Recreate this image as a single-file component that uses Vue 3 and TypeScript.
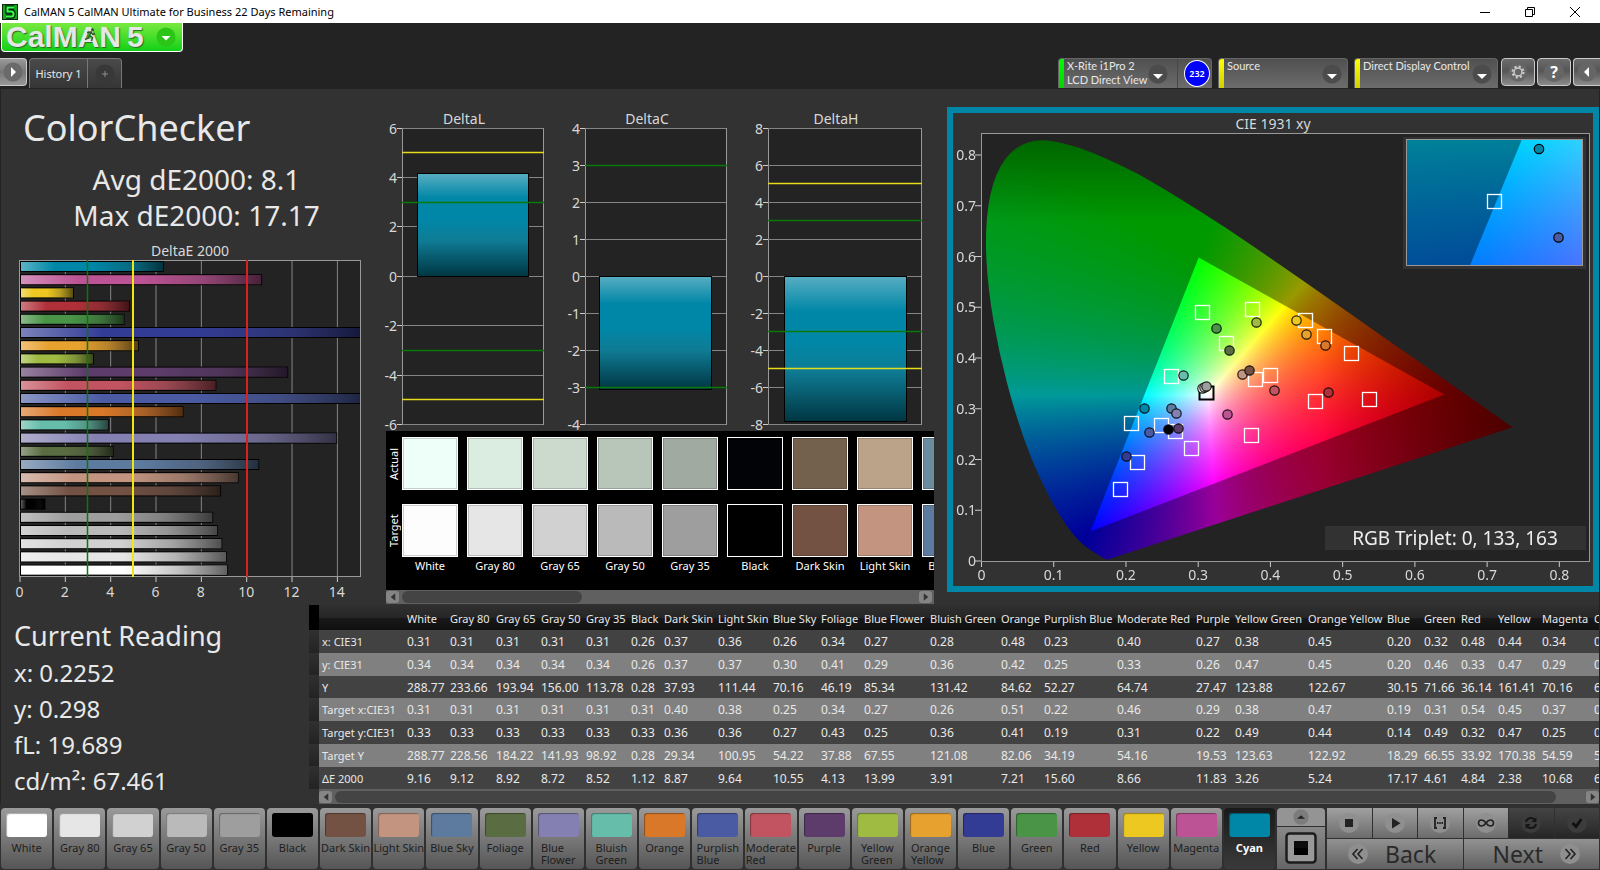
<script setup lang="ts">
import { computed, onMounted, ref } from 'vue'

interface Patch {
  name: string
  color: string
  actual?: string
  width: number
  values: string[]
}

const patches: Patch[] = [
  { name: 'White', color: '#fdfdfd', actual: '#edfff8', width: 43, values: ['0.31', '0.34', '288.77', '0.31', '0.33', '288.77', '9.16'] },
  { name: 'Gray 80', color: '#e6e6e6', actual: '#dbece0', width: 46, values: ['0.31', '0.34', '233.66', '0.31', '0.33', '228.56', '9.12'] },
  { name: 'Gray 65', color: '#d1d1d1', actual: '#ccdacd', width: 45, values: ['0.31', '0.34', '193.94', '0.31', '0.33', '184.22', '8.92'] },
  { name: 'Gray 50', color: '#bababa', actual: '#b8c6ba', width: 45, values: ['0.31', '0.34', '156.00', '0.31', '0.33', '141.93', '8.72'] },
  { name: 'Gray 35', color: '#9e9e9e', actual: '#a0aaa0', width: 45, values: ['0.31', '0.34', '113.78', '0.31', '0.33', '98.92', '8.52'] },
  { name: 'Black', color: '#000000', actual: '#020306', width: 33, values: ['0.26', '0.26', '0.28', '0.31', '0.33', '0.28', '1.12'] },
  { name: 'Dark Skin', color: '#735244', actual: '#74614d', width: 54, values: ['0.37', '0.37', '37.93', '0.40', '0.36', '29.34', '8.87'] },
  { name: 'Light Skin', color: '#c39581', actual: '#bba389', width: 55, values: ['0.36', '0.37', '111.44', '0.38', '0.36', '100.95', '9.64'] },
  { name: 'Blue Sky', color: '#5d7a9f', actual: '#698d9e', width: 48, values: ['0.26', '0.30', '70.16', '0.25', '0.27', '54.22', '10.55'] },
  { name: 'Foliage', color: '#5a6c42', width: 43, values: ['0.34', '0.41', '46.19', '0.34', '0.43', '37.88', '4.13'] },
  { name: 'Blue Flower', color: '#8480b2', width: 66, values: ['0.27', '0.29', '85.34', '0.27', '0.25', '67.55', '13.99'] },
  { name: 'Bluish Green', color: '#65bdaa', width: 71, values: ['0.28', '0.36', '131.42', '0.26', '0.36', '121.08', '3.91'] },
  { name: 'Orange', color: '#d97829', width: 43, values: ['0.48', '0.42', '84.62', '0.51', '0.41', '82.06', '7.21'] },
  { name: 'Purplish Blue', color: '#4a5ba4', width: 73, values: ['0.23', '0.25', '52.27', '0.22', '0.19', '34.19', '15.60'] },
  { name: 'Moderate Red', color: '#c25461', width: 79, values: ['0.40', '0.33', '64.74', '0.46', '0.31', '54.16', '8.66'] },
  { name: 'Purple', color: '#5d3c6b', width: 39, values: ['0.27', '0.26', '27.47', '0.29', '0.22', '19.53', '11.83'] },
  { name: 'Yellow Green', color: '#9fbb41', width: 73, values: ['0.38', '0.47', '123.88', '0.38', '0.49', '123.63', '3.26'] },
  { name: 'Orange Yellow', color: '#e7a12f', width: 79, values: ['0.45', '0.45', '122.67', '0.47', '0.44', '122.92', '5.24'] },
  { name: 'Blue', color: '#323c95', width: 37, values: ['0.20', '0.20', '30.15', '0.19', '0.14', '18.29', '17.17'] },
  { name: 'Green', color: '#499447', width: 37, values: ['0.32', '0.46', '71.66', '0.31', '0.49', '66.55', '4.61'] },
  { name: 'Red', color: '#b03039', width: 37, values: ['0.48', '0.33', '36.14', '0.54', '0.32', '33.92', '4.84'] },
  { name: 'Yellow', color: '#ecc821', width: 44, values: ['0.44', '0.47', '161.41', '0.45', '0.47', '170.38', '2.38'] },
  { name: 'Magenta', color: '#bc5394', width: 52, values: ['0.34', '0.29', '70.16', '0.37', '0.25', '54.59', '10.68'] },
  { name: 'Cyan', color: '#0087a7', width: 48, values: ['0.23', '0.30', '66.20', '0.21', '0.27', '56.10', '6.34'] },
]

const rowNames = ['x: CIE31', 'y: CIE31', 'Y', 'Target x:CIE31', 'Target y:CIE31', 'Target Y', 'ΔE 2000']
const tableWidth = 85 + patches.reduce((sum, p) => sum + p.width, 0)
const strip = patches.slice(0, 9)
const twoLine = new Set(['Blue Flower', 'Bluish Green', 'Purplish Blue', 'Moderate Red', 'Yellow Green', 'Orange Yellow'])
const buttonLabel = (name: string) => (twoLine.has(name) ? name.replace(' ', '\n') : name)

const selected = ref('Cyan')

const errorBars = computed(() =>
  [...patches].reverse().map((p, i) => ({
    color: p.name === 'White' ? '#ffffff' : p.color,
    y: 261 + i * 13.2,
    width: Math.min(Number(p.values[6]), 15.2) * 22.67,
  })),
)

interface DeltaChart {
  title: string
  titleX: number
  x: number
  width: number
  max: number
  step: number
  bar: { x: number; width: number; value: number }
  green: number
  yellow: number
}

const deltaCharts: DeltaChart[] = [
  { title: 'DeltaL', titleX: 464, x: 402, width: 141, max: 6, step: 2, bar: { x: 417, width: 111, value: 4.15 }, green: 3, yellow: 5 },
  { title: 'DeltaC', titleX: 647, x: 585, width: 141, max: 4, step: 1, bar: { x: 599, width: 112, value: -3.05 }, green: 3, yellow: 0 },
  { title: 'DeltaH', titleX: 836, x: 768, width: 153, max: 8, step: 2, bar: { x: 784, width: 122, value: -7.82 }, green: 3, yellow: 5 },
]
const deltaY = (c: DeltaChart, v: number) => Math.floor(277.3 - (v / c.max) * 148.3) - 0.5
const deltaTicks = (c: DeltaChart) => {
  const out: number[] = []
  for (let v = c.max; v >= -c.max; v -= c.step) out.push(v)
  return out
}
const limits = (c: DeltaChart) => [
  { v: c.green, color: '#0b780b' },
  { v: -c.green, color: '#0b780b' },
  ...(c.yellow ? [{ v: c.yellow, color: '#e6dc1e' }, { v: -c.yellow, color: '#e6dc1e' }] : []),
]

/* Chromaticity diagram */
const SX = 722.3
const SY = 507.5
const px = (x: number) => 981.5 + x * SX
const py = (y: number) => 561 - y * SY

const targets: [number, number][] = [
  [1202, 312], [1252, 309], [1226, 343], [1171, 376], [1255, 379], [1270, 375], [1131, 423],
  [1161, 425], [1175, 431], [1191, 448], [1251, 435], [1137, 462], [1120, 489], [1305, 320],
  [1324, 336], [1351, 353], [1315, 401], [1369, 399],
]
const readings: [number, number, string][] = [
  [1216, 328, '#499447'], [1256, 322, '#9fbb41'], [1229, 350, '#5a6c42'], [1183, 375, '#65bdaa'],
  [1242, 374, '#c39581'], [1249, 370, '#735244'], [1202, 388, '#ffffff'], [1204, 387, '#d1d1d1'],
  [1206, 386, '#9e9e9e'], [1227, 414, '#bc5394'], [1144, 408, '#0087a7'], [1171, 408, '#5d7a9f'],
  [1176, 413, '#8480b2'], [1149, 432, '#4a5ba4'], [1168, 429, '#000000'], [1178, 428, '#5d3c6b'],
  [1126, 456, '#323c95'], [1296, 320, '#ecc821'], [1306, 334, '#e7a12f'], [1325, 345, '#d97829'],
  [1328, 392, '#b03039'], [1274, 390, '#c25461'],
]

const locus: [number, number][] = [
  [0.1741, 0.005], [0.1714, 0.0051], [0.1689, 0.0069], [0.1644, 0.0109], [0.1566, 0.0177], [0.144, 0.0297],
  [0.1355, 0.0399], [0.1241, 0.0578], [0.1096, 0.0868], [0.0913, 0.1327], [0.0687, 0.2007], [0.0454, 0.295],
  [0.0235, 0.4127], [0.0082, 0.5384], [0.0039, 0.6548], [0.0139, 0.7502], [0.0389, 0.812], [0.0743, 0.8338],
  [0.1142, 0.8262], [0.1547, 0.8059], [0.1929, 0.7816], [0.2296, 0.7543], [0.3016, 0.6923], [0.3731, 0.6245],
  [0.4441, 0.5547], [0.5125, 0.4866], [0.5752, 0.4242], [0.627, 0.3725], [0.6658, 0.334], [0.6915, 0.3083],
  [0.719, 0.2809], [0.7347, 0.2653],
]

const gamutCanvas = ref<HTMLCanvasElement | null>(null)
const insetCanvas = ref<HTMLCanvasElement | null>(null)

function shade(w: number, h: number, left: number, top: number, sx: number, sy: number, level: number) {
  const layer = document.createElement('canvas')
  layer.width = w
  layer.height = h
  const ctx = layer.getContext('2d')!
  const img = ctx.createImageData(w, h)
  for (let j = 0; j < h; j++) {
    const y = Math.max(top - (j + 0.5) / sy, 0.0005)
    for (let i = 0; i < w; i++) {
      const x = left + (i + 0.5) / sx
      const X = x / y
      const Z = (1 - x - y) / y
      const r = Math.max(0, 3.2406 * X - 1.5372 - 0.4986 * Z)
      const g = Math.max(0, -0.9689 * X + 1.8758 + 0.0415 * Z)
      const b = Math.max(0, 0.0557 * X - 0.204 + 1.057 * Z)
      const fadeRed = 1 - Math.max(0, x - 0.47) * 1.95
      const fadeGreen = 1 - Math.max(0, y - 0.67) * 2.1
      const k = (255 * level * fadeRed * fadeGreen) / Math.max(r, g, b, 0.0001)
      const o = (j * w + i) * 4
      img.data[o] = r * k
      img.data[o + 1] = g * k
      img.data[o + 2] = b * k
      img.data[o + 3] = 255
    }
  }
  ctx.putImageData(img, 0, 0)
  return layer
}

function paint(canvas: HTMLCanvasElement, left: number, top: number, sx: number, sy: number) {
  const { width: w, height: h } = canvas
  const ctx = canvas.getContext('2d')!
  const at = (p: [number, number]): [number, number] => [(p[0] - left) * sx, (top - p[1]) * sy]

  ctx.save()
  ctx.beginPath()
  const pts = locus.map(at)
  ctx.moveTo(...pts[0])
  for (let i = 1; i < pts.length - 1; i++) {
    const [cx, cy] = pts[i]
    const [nx, ny] = pts[i + 1]
    ctx.quadraticCurveTo(cx, cy, (cx + nx) / 2, (cy + ny) / 2)
  }
  ctx.lineTo(...pts[pts.length - 1])
  ctx.closePath()
  ctx.clip()
  ctx.drawImage(shade(w, h, left, top, sx, sy, 0.6), 0, 0)
  ctx.restore()

  ctx.save()
  ctx.beginPath()
  ctx.moveTo(...at([0.64, 0.33]))
  ctx.lineTo(...at([0.3, 0.6]))
  ctx.lineTo(...at([0.15, 0.06]))
  ctx.closePath()
  ctx.clip()
  ctx.drawImage(shade(w, h, left, top, sx, sy, 1), 0, 0)
  ctx.restore()
}

onMounted(() => {
  if (gamutCanvas.value) paint(gamutCanvas.value, 0, 428 / SY, SX, SY)
  if (insetCanvas.value) paint(insetCanvas.value, 0.1765, 0.3039, 2780, 1872)
})
</script>

<template>
  <div class="app">
    <header class="titlebar">
      <svg class="app-icon" viewBox="0 0 16 16" aria-hidden="true">
        <rect width="16" height="16" fill="#0a2a0a" />
        <rect x="1" y="1" width="14" height="14" fill="#0fa81c" />
        <path d="M12 3.500H5.500V7.500H9.500Q11.500 7.500 11.500 10T9.500 12.500H4" fill="none" stroke="#021" stroke-width="4.500" />
        <path d="M12 3.500H5.500V7.500H9.500Q11.500 7.500 11.500 10T9.500 12.500H4" fill="none" stroke="#3dff4a" stroke-width="2" />
      </svg>
      <span class="window-title">CalMAN 5 CalMAN Ultimate for Business 22 Days Remaining</span>
      <button class="win" aria-label="Minimize"><svg viewBox="0 0 12 12"><path d="M1 6.500H11" /></svg></button>
      <button class="win" aria-label="Restore"><svg viewBox="0 0 12 12"><path d="M1.500 3.500H8.500V10.500H1.500ZM3.500 3.500V1.500H10.500V8.500H8.500" /></svg></button>
      <button class="win" aria-label="Close"><svg viewBox="0 0 12 12"><path d="M1 1L11 11M11 1L1 11" /></svg></button>
    </header>

    <button class="logo" aria-label="CalMAN 5 menu">
      <span class="logo-text">CalMAN</span>
      <span class="logo-text five">5</span>
      <svg class="runner" viewBox="0 0 12 14" aria-hidden="true">
        <circle cx="8.500" cy="1.700" r="1.500" fill="#2a5a2a" />
        <path d="M7.500 3.500L5.500 7.500L8.500 9.500L7.500 13M5.500 7.500L4.500 10L1 11.500M3 4.500L7 4L9 6.500L11 5.500" fill="none" stroke="#2a5a2a" stroke-width="1.500" />
      </svg>
      <svg class="logo-arrow" viewBox="0 0 20 20" aria-hidden="true">
        <circle cx="10" cy="10" r="9.500" fill="#2cc416" />
        <path d="M5.500 9H14.500L10 13.500Z" fill="#fff" />
      </svg>
    </button>

    <nav class="toolbar">
      <button class="side-btn first" aria-label="Expand left panel">
        <svg viewBox="0 0 20 20"><circle cx="10" cy="10" r="9.500" fill="#6a6a6a" /><path d="M8 5L13 10L8 15Z" fill="#fff" /></svg>
      </button>
      <div class="tabs">
        <button class="tab">History 1</button>
        <button class="tab add" aria-label="Add tab">
          <svg viewBox="0 0 20 20"><circle cx="10" cy="10" r="9.500" fill="#383838" /><path d="M10 7V13M7 10H13" stroke="#8c8c8c" /></svg>
        </button>
      </div>
      <span class="spacer"></span>
      <div class="device meter">
        <button class="device-btn">
          <span class="stripe green"></span>
          <span class="device-text">X-Rite i1Pro 2<br />LCD Direct View</span>
          <svg class="drop" viewBox="0 0 20 20"><circle cx="10" cy="10" r="9.500" /><path d="M5 10H15L10 15Z" fill="#fff" /></svg>
        </button>
        <span class="badge">232</span>
      </div>
      <button class="device device-btn source">
        <span class="stripe"></span>
        <span class="device-text">Source</span>
        <svg class="drop" viewBox="0 0 20 20"><circle cx="10" cy="10" r="9.500" /><path d="M5 10H15L10 15Z" fill="#fff" /></svg>
      </button>
      <button class="device device-btn display">
        <span class="stripe"></span>
        <span class="device-text">Direct Display Control</span>
        <svg class="drop" viewBox="0 0 20 20"><circle cx="10" cy="10" r="9.500" /><path d="M5 10H15L10 15Z" fill="#fff" /></svg>
      </button>
      <button class="side-btn" aria-label="Settings">
        <svg viewBox="0 0 20 20">
          <circle cx="10" cy="10" r="9.500" fill="#666" />
          <circle cx="10" cy="10" r="4" fill="none" stroke="#ccc" stroke-width="1.500" />
          <circle cx="10" cy="10" r="5.500" fill="none" stroke="#ccc" stroke-width="2" stroke-dasharray="2.160 2.160" />
        </svg>
      </button>
      <button class="side-btn help" aria-label="Help"><span>?</span></button>
      <button class="side-btn last" aria-label="Collapse right panel">
        <svg viewBox="0 0 20 20"><circle cx="10" cy="10" r="9.500" fill="#666" /><path d="M12 5L7 10L12 15Z" fill="#fff" /></svg>
      </button>
    </nav>

    <main class="workspace">
      <div class="upper">
        <section class="summary">
          <h1>ColorChecker</h1>
          <p class="stat">Avg dE2000: 8.1</p>
          <p class="stat">Max dE2000: 17.17</p>
          <svg class="chart" viewBox="1 240 379 365" role="img" aria-label="DeltaE 2000">
            <defs>
              <linearGradient id="sheenH">
                <stop offset="0" stop-color="#fff" stop-opacity=".36" />
                <stop offset=".24" stop-color="#fff" stop-opacity="0" />
                <stop offset=".5" stop-color="#222" stop-opacity="0" />
                <stop offset=".75" stop-color="#222" stop-opacity=".25" />
                <stop offset="1" stop-color="#000" stop-opacity=".62" />
              </linearGradient>
              <clipPath id="plotClip"><rect x="20" y="260" width="340" height="317" /></clipPath>
            </defs>
            <text x="190" y="256" text-anchor="middle">DeltaE 2000</text>
            <rect x="19.500" y="260.500" width="341" height="316" class="plot" />
            <g v-for="v in [0, 2, 4, 6, 8, 10, 12, 14]" :key="v">
              <line v-if="v" :x1="20 + v * 22.67" :x2="20 + v * 22.67" y1="261" y2="576" class="grid" />
              <line :x1="20 + v * 22.67" :x2="20 + v * 22.67" y1="577" y2="582" class="tick" />
              <text :x="19.500 + v * 22.67" y="597" text-anchor="middle">{{ v }}</text>
            </g>
            <g clip-path="url(#plotClip)">
              <g v-for="(b, i) in errorBars" :key="i">
                <rect x="20" :y="b.y" :width="b.width" height="11" fill="#000" />
                <rect x="21" :y="b.y + 1" :width="b.width - 2" height="9" :fill="b.color" />
                <rect x="21" :y="b.y + 1" :width="b.width - 2" height="9" fill="url(#sheenH)" />
              </g>
              <line x1="87.500" x2="87.500" y1="260" y2="577" stroke="#0b780b" stroke-width="1.500" />
              <line x1="133" x2="133" y1="260" y2="577" stroke="#f0e614" stroke-width="2" />
              <line x1="247" x2="247" y1="260" y2="577" stroke="#d8201e" stroke-width="2" />
            </g>
          </svg>
        </section>

        <section class="middle">
          <svg class="chart" viewBox="380 89 560 342" role="img" aria-label="Delta L, C and H">
            <defs>
              <linearGradient id="barV" x2="0" y2="1">
                <stop offset="0" stop-color="#58adc2" />
                <stop offset=".24" stop-color="#0087a7" />
                <stop offset=".45" stop-color="#0087a7" />
                <stop offset=".65" stop-color="#0f7c95" />
                <stop offset="1" stop-color="#003642" />
              </linearGradient>
            </defs>
            <g v-for="c in deltaCharts" :key="c.title">
              <text :x="c.titleX" y="124" text-anchor="middle">{{ c.title }}</text>
              <rect :x="c.x + 0.5" y="128.500" :width="c.width" height="296" class="plot" />
              <g v-for="v in deltaTicks(c)" :key="v">
                <line :x1="c.x" :x2="c.x + c.width" :y1="deltaY(c, v)" :y2="deltaY(c, v)" class="grid" />
                <line :x1="c.x - 5" :x2="c.x" :y1="deltaY(c, v)" :y2="deltaY(c, v)" class="tick" />
                <text :x="c.x - 5" :y="deltaY(c, v) + 5.5" text-anchor="end">{{ v }}</text>
              </g>
              <rect
                :x="c.bar.x + 0.5"
                :y="Math.min(deltaY(c, 0), deltaY(c, c.bar.value))"
                :width="c.bar.width"
                :height="Math.abs(deltaY(c, 0) - deltaY(c, c.bar.value))"
                fill="url(#barV)"
                stroke="#000"
              />
              <line
                v-for="l in limits(c)"
                :key="l.v"
                :x1="c.x"
                :x2="c.x + c.width + 1"
                :y1="deltaY(c, l.v)"
                :y2="deltaY(c, l.v)"
                :stroke="l.color"
                stroke-width="1.500"
              />
            </g>
          </svg>

          <div class="compare">
            <div class="row-names"><span>Actual</span><span>Target</span></div>
            <div class="compare-list">
              <div v-for="p in strip" :key="p.name" class="pair">
                <span class="chip" :style="{ background: p.actual }"></span>
                <span class="chip" :style="{ background: p.color }"></span>
                <span class="pair-name">{{ p.name }}</span>
              </div>
            </div>
          </div>
          <div class="scroll strip-scroll">
            <button aria-label="Scroll left"><svg viewBox="0 0 8 10"><path d="M7 0V10L1 5Z" /></svg></button>
            <span class="thumb"></span>
            <button aria-label="Scroll right"><svg viewBox="0 0 8 10"><path d="M1 0V10L7 5Z" /></svg></button>
          </div>
        </section>

        <section class="cie">
          <svg class="chart" viewBox="953 113 640 473" role="img" aria-label="CIE 1931 xy">
            <text x="1273" y="129" text-anchor="middle">CIE 1931 xy</text>
            <rect x="981.500" y="133.500" width="608" height="428" fill="#232323" />
            <foreignObject x="981.500" y="133.500" width="608" height="428">
              <canvas ref="gamutCanvas" width="608" height="428"></canvas>
            </foreignObject>
            <rect x="981.500" y="133.500" width="608" height="428" fill="none" stroke="#999" />
            <g v-for="n in 9" :key="n">
              <line :x1="px((n - 1) / 10)" :x2="px((n - 1) / 10)" y1="562" y2="567" class="tick" />
              <text :x="px((n - 1) / 10)" y="580" text-anchor="middle">{{ (n - 1) / 10 }}</text>
              <line x1="975" x2="981" :y1="py((n - 1) / 10)" :y2="py((n - 1) / 10)" class="tick" />
              <text x="976" :y="py((n - 1) / 10) + 5" text-anchor="end">{{ (n - 1) / 10 }}</text>
            </g>
            <rect x="1199.500" y="386.500" width="14" height="13" fill="none" stroke="#000" stroke-width="2" />
            <rect v-for="(t, i) in targets" :key="'t' + i" :x="t[0] - 6.5" :y="t[1] - 6.5" width="14" height="14" fill="none" stroke="#fff" stroke-width="1.300" />
            <circle v-for="(r, i) in readings" :key="'r' + i" :cx="r[0] + 0.5" :cy="r[1] + 0.5" r="4.700" :fill="r[2]" stroke="#000" stroke-width="1.200" stroke-opacity=".85" />

            <rect x="1403" y="137" width="183" height="132" fill="#323232" />
            <foreignObject x="1407" y="140" width="175" height="125">
              <canvas ref="insetCanvas" width="175" height="125"></canvas>
            </foreignObject>
            <rect x="1406.500" y="139.500" width="176" height="126" fill="none" stroke="#999" />
            <circle cx="1539" cy="149" r="4.700" fill="#0087a7" stroke="#000" stroke-width="1.200" />
            <circle cx="1558.500" cy="237.500" r="4.700" fill="#4a5ba4" stroke="#000" stroke-width="1.200" />
            <rect x="1487.500" y="194.500" width="14" height="14" fill="none" stroke="#fff" stroke-width="1.300" />

            <rect x="1325" y="526" width="261" height="24" fill="#323232" />
            <text x="1455" y="545" text-anchor="middle" class="triplet">RGB Triplet: 0, 133, 163</text>
          </svg>
        </section>
      </div>

      <div class="lower">
        <section class="reading">
          <h2>Current Reading</h2>
          <p>x: 0.2252</p>
          <p>y: 0.298</p>
          <p>fL: 19.689</p>
          <p>cd/m²: 67.461</p>
        </section>
        <section class="data">
          <div class="table-row">
            <div class="gutter"><span v-for="n in 8" :key="n"></span></div>
            <div class="table-wrap">
              <table :style="{ width: tableWidth + 'px' }">
                <colgroup>
                  <col class="name-col" />
                  <col v-for="p in patches" :key="p.name" :style="{ width: p.width + 'px' }" />
                </colgroup>
                <thead>
                  <tr>
                    <td></td>
                    <th v-for="p in patches" :key="p.name" scope="col">{{ p.name }}</th>
                  </tr>
                </thead>
                <tbody>
                  <tr v-for="(name, r) in rowNames" :key="name">
                    <th scope="row">{{ name }}</th>
                    <td v-for="p in patches" :key="p.name">{{ p.values[r] }}</td>
                  </tr>
                </tbody>
              </table>
            </div>
          </div>
          <div class="scroll table-scroll">
            <button aria-label="Scroll table left"><svg viewBox="0 0 8 10"><path d="M7 0V10L1 5Z" /></svg></button>
            <span class="thumb"></span>
            <button aria-label="Scroll table right"><svg viewBox="0 0 8 10"><path d="M1 0V10L7 5Z" /></svg></button>
          </div>
        </section>
      </div>
    </main>

    <footer class="bottom">
      <div class="patch-bar">
        <button
          v-for="p in patches"
          :key="p.name"
          class="patch"
          :class="{ active: p.name === selected }"
          @click="selected = p.name"
        >
          <span class="patch-color" :style="{ background: p.name === 'White' ? '#ffffff' : p.color }"></span>
          <span class="patch-name">{{ buttonLabel(p.name) }}</span>
        </button>
      </div>
      <div class="window-ctl">
        <button class="up" aria-label="Show more">
          <svg viewBox="0 0 20 20"><circle cx="10" cy="10" r="8.500" fill="#7c7c7c" /><path d="M5.500 12H14.500L10 8Z" fill="#222" /></svg>
        </button>
        <button class="pattern" aria-label="Pattern window">
          <svg viewBox="0 0 32 32">
            <rect x="1.500" y="1.500" width="29" height="29" rx="3" fill="#999" stroke="#1c1c1c" stroke-width="2.500" />
            <rect x="9" y="9" width="14" height="14" fill="#0c0c0c" /><rect x="9" y="16" width="14" height="7" fill="#000" />
          </svg>
        </button>
      </div>
      <div class="actions">
        <button aria-label="Stop"><svg viewBox="0 0 20 20"><circle cx="10" cy="10" r="10" /><path d="M6 6H14V14H6Z" fill="#222" /></svg></button>
        <button aria-label="Play"><svg viewBox="0 0 20 20"><circle cx="10" cy="10" r="10" /><path d="M7 5V15.500L15.500 10.250Z" fill="#222" /></svg></button>
        <button aria-label="Read series"><svg viewBox="0 0 20 20"><circle cx="10" cy="10" r="10" /><path d="M7 5H5V15H7M13 5H15V15H13" fill="none" stroke="#222" stroke-width="1.800" /><path d="M7 10H13" stroke="#222" stroke-width="2" stroke-dasharray="1.500 .750" /></svg></button>
        <button aria-label="Read continuously"><svg viewBox="0 0 20 20"><circle cx="10" cy="10" r="10" /><path d="M10 10C8 7 6.500 7 5.500 7A3 3 0 0 0 5.500 13C6.500 13 8 13 10 10S13.500 7 14.500 7A3 3 0 0 1 14.500 13C13.500 13 12 13 10 10Z" fill="none" stroke="#222" stroke-width="1.600" /></svg></button>
        <button class="dim" aria-label="Refresh"><svg viewBox="0 0 20 20"><circle cx="10" cy="10" r="10" /><path d="M5 9A5 5 0 0 1 13.500 6.500M15 11A5 5 0 0 1 6.500 13.500" fill="none" stroke="#161616" stroke-width="2" /><path d="M15.500 4V9H10.500ZM4.500 16V11H9.500Z" fill="#161616" /></svg></button>
        <button class="dim" aria-label="Accept"><svg viewBox="0 0 20 20"><circle cx="10" cy="10" r="10" /><path d="M5.500 10L9 13.500L14.500 6" fill="none" stroke="#101010" stroke-width="2.800" /></svg></button>
        <button class="nav"><svg viewBox="0 0 20 20"><circle cx="10" cy="10" r="10" /><path d="M9.500 5L5 10L9.500 15M14.500 5L10 10L14.500 15" fill="none" stroke="#222" stroke-width="1.600" /></svg><span>Back</span></button>
        <button class="nav next"><span>Next</span><svg viewBox="0 0 20 20"><circle cx="10" cy="10" r="10" /><path d="M5.500 5L10 10L5.500 15M10.500 5L15 10L10.500 15" fill="none" stroke="#222" stroke-width="1.600" /></svg></button>
      </div>
    </footer>
  </div>
</template>

<style>
body {
  margin: 0;
  background: #232323;
}
</style>

<style scoped>
.app {
  min-height: 100vh;
  overflow: hidden;
  background: #232323;
  color: #e8e8e8;
  font-family: 'Noto Sans', 'Open Sans', sans-serif;
  font-size: 11px;
}
.app * {
  box-sizing: border-box;
}
button {
  margin: 0;
  padding: 0;
  border: 0;
  color: inherit;
  font: inherit;
  cursor: pointer;
}
svg {
  display: block;
}
h1,
h2,
p {
  margin: 0;
  font-weight: 400;
}

.titlebar {
  display: flex;
  align-items: center;
  height: 23px;
  padding-right: 3px;
  background: #fff;
  color: #000;
}
.app-icon {
  width: 16px;
  height: 16px;
  margin: 0 6px 0 2px;
}
.window-title {
  flex: 1;
}
.win {
  display: grid;
  place-items: center;
  width: 45px;
  height: 22px;
  background: none;
}
.win svg {
  width: 12px;
  height: 12px;
  fill: none;
  stroke: #000;
}

.logo {
  position: relative;
  display: flex;
  align-items: center;
  width: 182px;
  height: 29px;
  margin-left: 1px;
  padding: 0 6px 0 4px;
  border: 1px solid #fff;
  border-top: 0;
  border-radius: 0 0 4px 4px;
  background: linear-gradient(#7ae840, #46df2b 50%, #13cf17);
}
.logo-text {
  font: 700 30px/26px 'Liberation Sans', Arial, sans-serif;
  color: #e6e6e6;
  text-shadow: 1px 1px 1px #2a6a2a;
}
.five {
  margin-left: 6px;
}
.runner {
  position: absolute;
  left: 82px;
  top: 5px;
  width: 12px;
  height: 14px;
}
.logo-arrow {
  width: 20px;
  height: 20px;
  margin-left: auto;
}

.toolbar {
  display: flex;
  height: 37px;
  padding-top: 6px;
}
.side-btn {
  display: grid;
  place-items: center;
  width: 32px;
  height: 28px;
  margin-right: 2px;
  border: 1px solid #cacaca;
  border-radius: 4px;
  background: linear-gradient(#6b6b6b, #565656 45%, #8b8b8b);
}
.display ~ .side-btn {
  width: 34px;
}
.side-btn svg {
  width: 20px;
  height: 20px;
}
.side-btn.first {
  width: 27px;
  border-left: 0;
  border-radius: 0 4px 4px 0;
  background: linear-gradient(#999, #777 50%, #999);
}
.display ~ .side-btn.last {
  width: 27px;
  margin-right: 0;
  border-right: 0;
  border-radius: 4px 0 0 4px;
}
.help {
  color: #fff;
  font-size: 16px;
  font-weight: 700;
}
.help span {
  width: 20px;
  border-radius: 50%;
  background: #666;
  line-height: 20px;
}
.tabs {
  display: flex;
  height: 30px;
  border: 1px solid #777;
  border-bottom: 0;
  border-radius: 4px 4px 0 0;
  background: linear-gradient(#4a4a4a, #353535);
}
.tab {
  width: 57px;
  background: none;
}
.tab.add {
  display: grid;
  place-items: center;
  width: 34px;
  border-left: 1px solid #777;
}
.add svg {
  width: 20px;
  height: 20px;
}
.spacer {
  flex: 1;
}
.device {
  display: flex;
  height: 30px;
  margin-right: 6px;
  border: 1px solid #666;
  border-bottom: 0;
  border-radius: 4px 4px 0 0;
  background: linear-gradient(#505050, #6c6c6c);
  overflow: hidden;
}
.device-btn {
  display: flex;
  align-items: center;
  text-align: left;
}
.meter .device-btn {
  width: 119px;
  border-right: 1px solid #474747;
  background: none;
}
.meter {
  width: 154px;
}
.source {
  width: 130px;
}
.display {
  width: 144px;
  margin-right: 3px;
}
.stripe {
  align-self: stretch;
  flex: none;
  width: 5px;
  background: linear-gradient(#ff0, #d0d000);
}
.stripe.green {
  background: linear-gradient(#0f0, #00d400);
}
.device-text {
  flex: 1;
  align-self: flex-start;
  margin-left: 3px;
  font-family: Lato, 'Noto Sans', sans-serif;
  font-size: 11px;
  line-height: 14px;
  white-space: nowrap;
}
.drop {
  flex: none;
  width: 20px;
  height: 20px;
  margin-right: 5px;
}
.meter .drop {
  margin-right: 9px;
}
.drop circle {
  fill: #4c4c4c;
}
.badge {
  width: 26px;
  height: 27px;
  margin: 1px 0 0 6px;
  border: 1px solid #fff;
  border-radius: 50%;
  background: #00f;
  color: #fff;
  font-size: 9px;
  font-weight: 600;
  line-height: 25px;
  text-align: center;
}

.workspace {
  margin: 0 1px;
  background: #323232;
}
.upper {
  display: grid;
  grid-template-columns: minmax(0, 379fr) minmax(0, 560fr) minmax(0, 659fr);
}
.chart {
  width: 100%;
  height: auto;
}
.chart text {
  fill: #d8d8d8;
  font-size: 14px;
}
.chart .triplet {
  fill: #eee;
  font-size: 19px;
}
.plot {
  fill: #232323;
  stroke: #999;
}
.grid {
  stroke: #858585;
}
.tick {
  stroke: #ccc;
}
canvas {
  display: block;
  width: 100%;
  height: 100%;
}

.summary {
  padding-top: 15px;
}
h1 {
  margin: 0 0 9px 22px;
  font-size: 36px;
  line-height: 48px;
}
.stat {
  padding-left: 12px;
  font-size: 28px;
  line-height: 36px;
  text-align: center;
}
.stat + .stat {
  margin-bottom: 7px;
}

.compare {
  display: flex;
  height: 159px;
  margin: 0 6px;
  background: #000;
  color: #fff;
}
.row-names {
  display: flex;
  flex-direction: column;
  gap: 14px;
  width: 16px;
  padding-top: 6px;
}
.row-names span {
  height: 53px;
  writing-mode: vertical-rl;
  transform: rotate(180deg);
  line-height: 16px;
  text-align: center;
}
.compare-list {
  display: flex;
  gap: 9px;
  flex: 1;
  min-width: 0;
  padding-top: 6px;
  overflow: hidden;
}
.pair {
  flex: none;
  width: 56px;
  text-align: center;
}
.chip {
  display: block;
  height: 53px;
  margin-bottom: 14px;
  border: 1px solid #fff;
  box-shadow: inset 0 0 0 1px rgba(0, 0, 0, 0.18);
}
.chip + .chip {
  margin-bottom: 1px;
}
.pair-name {
  display: block;
  line-height: 16px;
  white-space: nowrap;
}
.scroll {
  display: flex;
  align-items: center;
  height: 14px;
  background: #606060;
}
.scroll button {
  display: grid;
  place-items: center;
  width: 13px;
  height: 12px;
  border-radius: 3px;
  background: #858585;
}
.scroll svg {
  width: 6px;
  height: 10px;
  fill: #333;
}
.thumb {
  height: 12px;
  margin-left: 3px;
  border-radius: 6px;
  background: #444;
}
.strip-scroll {
  margin: 0 6px;
  padding-right: 2px;
}
.strip-scroll .thumb {
  width: 33%;
  margin-right: auto;
}

.cie {
  align-self: start;
  margin: 18px 0 0 7px;
  border: 6px solid #0087a7;
}

.lower {
  display: flex;
}
.reading {
  flex: none;
  width: 308px;
  padding: 11px 0 0 13px;
}
h2 {
  font-size: 27px;
  line-height: 39px;
}
.reading p {
  font-size: 24px;
  line-height: 36px;
}
.data {
  flex: 1;
  min-width: 0;
}
.table-row {
  display: flex;
}
.gutter {
  display: grid;
  flex: none;
  width: 10px;
  grid-template-rows: 25px repeat(7, 1fr);
}
.gutter span {
  background: linear-gradient(#303030, #232323);
}
.gutter span:first-child {
  background: #000;
}
.table-wrap {
  flex: 1;
  min-width: 0;
  overflow: hidden;
}
table {
  table-layout: fixed;
  border-collapse: collapse;
}
.name-col {
  width: 85px;
}
th,
td {
  padding: 1px 0 0 3px;
  overflow: visible;
  font-size: 12px;
  font-weight: 400;
  line-height: 20px;
  text-align: left;
  white-space: nowrap;
}
th {
  font-size: 11px;
}
thead tr {
  height: 25px;
  background: linear-gradient(#303030, #262626 50%, #181818 52%, #101010);
}
thead th {
  padding-top: 2px;
}
tbody tr {
  height: 23px;
  background: #424242;
}
tbody tr:nth-child(even) {
  background: #808080;
}
tbody tr:nth-child(4n + 3) {
  height: 22px;
}
.table-scroll {
  height: 15px;
  margin-left: 10px;
}
.table-scroll .thumb {
  flex: 1;
  margin-right: 30px;
}

.bottom {
  display: flex;
  gap: 2px;
  padding: 4px 1px 1px;
  background: #303030;
}
.patch-bar {
  display: grid;
  flex: 1;
  grid-template-columns: repeat(24, minmax(0, 1fr));
  gap: 2px;
}
.patch {
  display: flex;
  flex-direction: column;
  align-items: center;
  height: 61px;
  padding-top: 5px;
  border-radius: 4px;
  background: linear-gradient(#9a9a9a, #787878 50%, #555);
  color: #1e1e1e;
}
.patch-color {
  width: 41px;
  height: 24px;
  border-radius: 3px;
  box-shadow: inset 1px 1px 1px rgba(0, 0, 0, 0.35);
}
.patch-name {
  margin-top: 5px;
  font-size: 11px;
  line-height: 12px;
  text-align: left;
  white-space: pre;
}
.patch.active {
  background: linear-gradient(#1a1a1a, #3a3a3a);
  color: #fff;
  font-weight: 700;
}
.window-ctl {
  display: grid;
  grid-template-rows: 18px 42px;
  gap: 1px;
  width: 48px;
}
.window-ctl button {
  display: grid;
  place-items: center;
  background: linear-gradient(#888, #666);
}
.window-ctl .up {
  border-radius: 4px 4px 0 0;
  background: #949494;
}
.up svg {
  width: 18px;
  height: 18px;
}
.pattern svg {
  width: 32px;
  height: 32px;
}
.actions {
  display: grid;
  grid-template-columns: repeat(6, 1fr);
  grid-template-rows: 30px 30px;
  gap: 1px;
  width: 272px;
}
.actions button {
  display: grid;
  place-items: center;
  background: linear-gradient(#a0a0a0, #6c6c6c);
  color: #2a2a2a;
}
.actions svg {
  width: 20px;
  height: 20px;
}
.actions circle {
  fill: #8f8f8f;
}
.actions .dim {
  background: linear-gradient(#444, #262626);
}
.actions .dim circle {
  fill: #3c3c3c;
}
.actions .nav {
  display: flex;
  grid-column: span 3;
  align-items: center;
  gap: 17px;
  padding-left: 21px;
  background: linear-gradient(#929292, #606060);
  font-size: 23px;
  line-height: 28px;
}
.actions .next {
  justify-content: flex-end;
  padding: 0 19px 0 0;
}
</style>
